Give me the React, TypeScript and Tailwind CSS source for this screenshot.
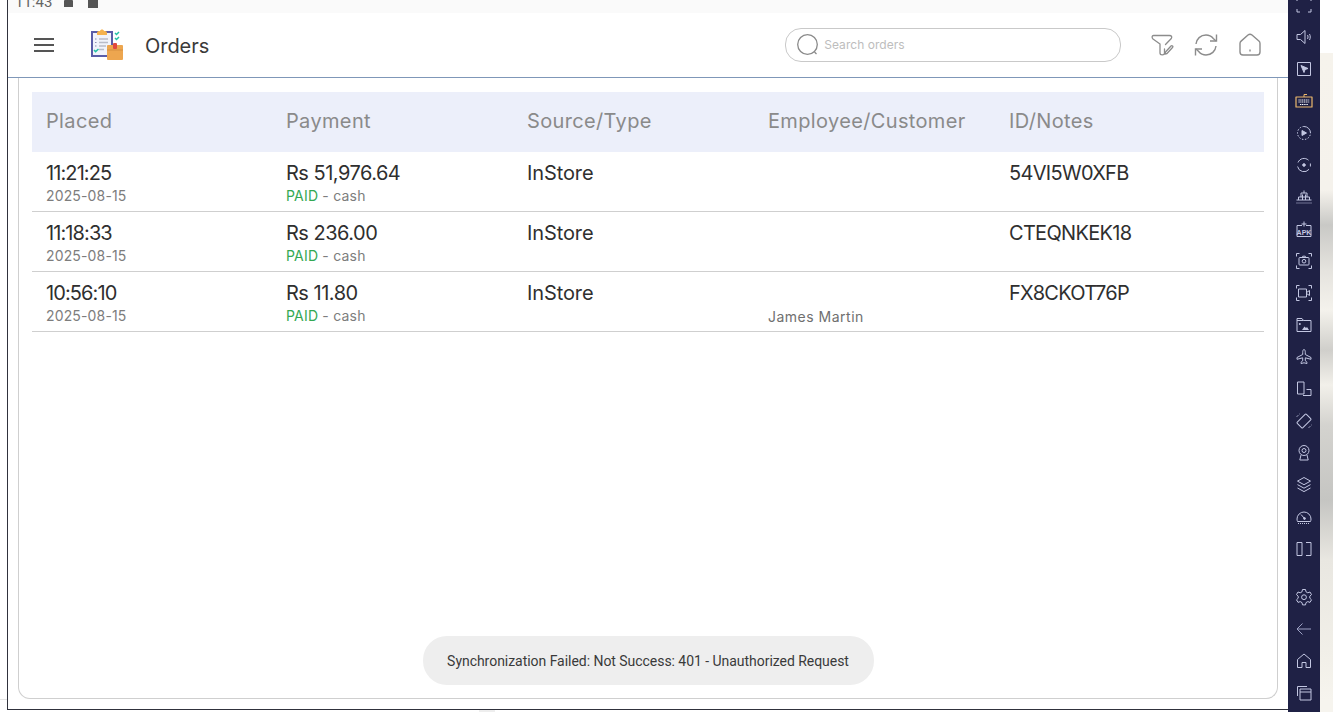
import React from "react";

const S = ({ children, size = 18, color = "#c3c7e2" }: { children: React.ReactNode; size?: number; color?: string }) => (
  <svg width={size} height={size} viewBox="0 0 18 18" fill="none" stroke={color} strokeWidth="1" strokeLinejoin="round">
    {children}
  </svg>
);

const side: (React.ReactNode)[] = [
  <S key="a"><path d="M2 5V2h3M13 2h3v3M16 13v3h-3M5 16H2v-3" /></S>,
  <S key="b"><path d="M2 6.500h3.500L10 2.500v13l-4.500-4H2zM12.500 7c.7 1.200.7 2.800 0 4M14.500 6c1 2 1 4 0 6" /></S>,
  <S key="c"><rect x="2.500" y="2.500" width="13" height="13" /><path d="M6 5.500l7 3-3 1-1 3z" fill="#c3c7e2" /></S>,
  <S key="d" color="#ecb86c"><rect x="1" y="5" width="16" height="10" strokeWidth="1.200" /><path d="M9 5V2.500h3" /><path d="M3.500 8h11M3.500 10h11M5 12.500h8" stroke="#ffffff" strokeDasharray="1.200 .6" /></S>,
  <S key="e"><path d="M15.500 9A6.500 6.500 0 0 0 9 2.500" /><path d="M9 2.500A6.500 6.500 0 0 0 2.500 9c0 3.600 2.900 6.500 6.500 6.500s6.500-2.900 6.500-6.500" strokeDasharray="1.500 1.500" /><path d="M7 6.500l4.500 2.500L7 11.500z" fill="#c3c7e2" /></S>,
  <S key="f"><path d="M13.500 4.200A6.500 6.500 0 0 0 3 6.500M2.600 10.500a6.500 6.500 0 0 0 11.400 2.800M15.400 7.500v3" /><circle cx="9" cy="9" r="1.300" fill="#c3c7e2" /></S>,
  <S key="g"><path d="M1.500 12h15M3.500 12V9h11v3M6 9V5h6v4M9 2.500V5M7.500 6.500V12M10.500 6.500V12" /><path d="M1.500 15h15" strokeDasharray="1 1" /></S>,
  <S key="h"><path d="M2 5.500h5M11 5.500h5M16 5.500V16.500H2V5.500M9 1.500v5M6.500 4h5" /><text x="9" y="14.500" textAnchor="middle" fontSize="7" fontWeight="600" fontFamily="'Liberation Sans',sans-serif" fill="#c3c7e2" stroke="none">APK</text></S>,
  <S key="i"><path d="M1.500 4.500V1.500h3M13.500 1.500h3v3M16.500 13.500v3h-3M4.500 16.500h-3v-3" /><rect x="4" y="5.500" width="10" height="7.500" rx=".8" /><circle cx="9" cy="9.200" r="1.800" /><path d="M7 5.500l.8-1.300h2.400l.8 1.300" /></S>,
  <S key="j"><path d="M1.500 4.500V1.500h3M13.500 1.500h3v3M16.500 13.500v3h-3M4.500 16.500h-3v-3" /><rect x="3.500" y="5" width="8" height="8" /><path d="M11.500 8.500L14.500 6.500v5l-3-2" /></S>,
  <S key="k"><path d="M2 2.500h5l1.500 2H16v11H2zM2 4.500h6.500" /><path d="M7 14l2.500-3.500 1.500 1.500 1-1 2 3z" fill="#c3c7e2" stroke="none" /><circle cx="4.800" cy="8" r="1" fill="#c3c7e2" stroke="none" /></S>,
  <S key="l"><path d="M9 1.500c.9 0 1.300 1.400 1.300 3v2l5.700 3v1.800l-5.700-1.500v3l1.700 1.500v1.200L9 14.800l-3 .7v-1.200l1.700-1.500v-3L2 11.300V9.500l5.700-3v-2c0-1.600.4-3 1.300-3z" /></S>,
  <S key="m"><rect x="2.500" y="2" width="6.500" height="12" /><path d="M11.500 9.500h4.500v6H8" /></S>,
  <S key="n"><rect x="5" y="2.500" width="8" height="13" rx="1" transform="rotate(45 9 9)" /><path d="M1.500 5l3-3M13.500 16l3-3" strokeDasharray="1 .8" /></S>,
  <S key="o"><circle cx="9" cy="6.500" r="5" /><circle cx="9" cy="6.500" r="2" /><path d="M6 11L4.800 16h8.400L12 11" /></S>,
  <S key="p"><path d="M9 1.500l6.500 3.600L9 8.700 2.500 5.100zM2.500 8.600L9 12.200l6.500-3.600M2.500 12L9 15.600l6.500-3.600" /></S>,
  <S key="q"><path d="M2 11a7 7 0 1 1 14 0c0 1-.2 1.700-.5 2.500h-13C2.200 12.700 2 12 2 11z" /><path d="M6 6.500l3.500 4" /><circle cx="9.500" cy="10.500" r=".9" fill="#c3c7e2" /><path d="M3 15.500h12" strokeDasharray="1 1" /></S>,
  <S key="r"><rect x="2" y="2.500" width="5" height="13" /><path d="M11 2.500h5v13h-5" /></S>,
  null,
  <S key="s"><path d="M7.500 1.500h3l.5 2.300 1.800 1 2.200-.8 1.500 2.600-1.700 1.600v2l1.700 1.600-1.500 2.600-2.200-.8-1.800 1-.5 2.300h-3l-.5-2.300-1.800-1-2.200.8L1.500 11.800 3.200 10.200v-2L1.500 6.600 3 4l2.200.8 1.800-1z" /><circle cx="9" cy="9.200" r="2.400" /></S>,
  <S key="t" color="#9da1c4"><path d="M16 9H2M7.500 3.500L2 9l5.500 5.500" /></S>,
  <S key="u"><path d="M2.500 15.500V7.500L9 2l6.500 5.500v8h-4.500v-5H7v5z" /></S>,
  <S key="v"><path d="M2.500 12V2.500H12" /><rect x="5" y="5" width="11" height="11" /><path d="M5 8h11" /></S>,
];

const rows = [
  { t: "11:21:25", p: "Rs 51,976.64", id: "54VI5W0XFB", e: "" },
  { t: "11:18:33", p: "Rs 236.00", id: "CTEQNKEK18", e: "" },
  { t: "10:56:10", p: "Rs 11.80", id: "FX8CKOT76P", e: "James Martin" },
];

const cols = "grid grid-cols-[240px_241px_241px_241px_1fr]";

const Logo = () => (
  <svg width="36" height="36" viewBox="0 0 36 36" fill="none">
    <rect x="1" y="4" width="22" height="26" fill="#5a5da8" />
    <rect x="3" y="6" width="18" height="22" fill="#f1f3fb" />
    <path d="M7 6c0-2 2-2 3-2 .4-2 3.600-2 4 0 1 0 3 0 3 2v2H7z" fill="#f5b24f" />
    <path d="M9 12h9M9 15.500h9M9 19h7M9 22.500h5" stroke="#b9bcc9" strokeWidth="1.600" />
    <path d="M5 12h1.500M5 15.500h1.500M5 19h1.500" stroke="#8b8fb5" strokeWidth="1.200" />
    <path d="M4 23l1.600 1.600L8.500 22" stroke="#25c2a6" strokeWidth="1.500" />
    <path d="M25 6l1.500 1.500L29 5M25 11l1.500 1.500L29 10" stroke="#25c2a6" strokeWidth="1.500" />
    <rect x="17" y="18" width="16" height="15" rx="1" fill="#eda64f" />
    <path d="M17 23h16" stroke="#cf8a3c" strokeWidth=".8" />
    <rect x="23" y="16" width="4" height="6" rx="1" fill="#e2483f" />
  </svg>
);

export default function App() {
  return (
    <div className="flex h-[712px] w-[1333px] overflow-hidden bg-white font-['Inter',sans-serif]">
      <div className="flex w-[1288px] shrink-0 flex-col">
        <div className="flex h-[710px] shrink-0">
          <div className="flex w-[7px] shrink-0 flex-col justify-end">
            <div className="mb-[10px] h-px bg-[#e4e4e4]" />
          </div>
          <div className="flex min-w-0 flex-1 flex-col border-b border-l border-[#30323c]">
            <div className="flex h-[13px] shrink-0 items-start overflow-hidden bg-[#fafafa] pl-[7px] font-['Roboto',sans-serif] text-[15px] leading-[20px] text-[#666]">
              <span className="-mt-[8px] w-[49px] shrink-0">11:43</span>
              <span className="h-[7px] w-[9px] rounded-t-[1px] bg-[#555]" />
              <span className="ml-[15px] h-[8px] w-[10px] bg-[#555]" />
            </div>
            <header className="flex h-[65px] shrink-0 items-center border-b border-[#7f97b8]">
              <button className="ml-[26px] flex w-[20px] flex-col gap-[4px]">
                <span className="h-[2px] bg-[#555]" />
                <span className="h-[2px] bg-[#555]" />
                <span className="h-[2px] bg-[#555]" />
              </button>
              <div className="ml-[36px]"><Logo /></div>
              <h1 className="ml-[19px] mt-[2px] text-[20px] leading-[28px] tracking-[-.05px] text-[#3a3a3a]">Orders</h1>
              <div className="ml-[576px] flex h-[34px] w-[336px] items-center rounded-[16px] border border-[#c9c9c9] pl-[10px]">
                <svg width="24" height="24" viewBox="0 0 24 24" fill="none" stroke="#8a8a8a" strokeWidth="1.300"><circle cx="11.500" cy="11.500" r="9.800" /><path d="M18.500 19l2 2" /></svg>
                <span className="ml-[4px] text-[12px] leading-none tracking-[.05px] text-[#bdbdbd]">Search orders</span>
              </div>
              <div className="ml-[29px] flex items-center gap-[20px]">
                <svg width="24" height="24" viewBox="0 0 24 24" fill="none" stroke="#8c8c8c" strokeWidth="1.300" strokeLinejoin="round" strokeLinecap="round"><path d="M3.500 2.500h16c2 0 2.800 1.500 1.800 3L15.500 11.500M14.500 20V16M10 11L3 6c-1.500-1.500-1-3.500.5-3.500M10 11v9c0 2.500 4.500 2.500 4.500 0" /><path d="M15.500 19l5.500-6c1-1 2.500.5 1.500 1.500L17 20.500l-2 .5z" /></svg>
                <svg width="24" height="24" viewBox="0 0 24 24" fill="none" stroke="#8c8c8c" strokeWidth="1.400"><path d="M2 11C2.500 6 6.500 2 12 2c3 0 5.500 1.300 7.300 3.500L22 8" /><path d="M22.500 1.500V8H16" /><path d="M22 13c-.5 5-4.500 9-10 9-3 0-5.500-1.300-7.300-3.500L2 16" /><path d="M1.500 22.500V16H8" /></svg>
                <svg width="24" height="24" viewBox="0 0 24 24" fill="none" stroke="#8c8c8c" strokeWidth="1.400" strokeLinejoin="round"><path d="M2 10.500c0-1 .4-1.800 1.100-2.400L10 2c1.200-1 2.800-1 4 0l6.900 6.100c.7.600 1.100 1.400 1.100 2.400V19c0 2-1.500 3-3 3H5c-1.500 0-3-1-3-3z" /><path d="M12 16.500v2" /></svg>
              </div>
            </header>
            <div className="flex min-h-0 flex-1 flex-col pl-[10px] pr-[10px] pb-[10px]">
              <div className="flex flex-1 flex-col rounded-b-[12px] border border-t-0 border-[#cfcfcf] px-[13px] pt-[14px]">
                <div className={`${cols} h-[60px] bg-[#eceffa] pb-[3px] text-[20px] tracking-[.35px] text-[#8a8a8a]`}>
                  {["Placed", "Payment", "Source/Type", "Employee/Customer", "ID/Notes"].map((h) => (
                    <div key={h} className="flex items-center pl-[14px]">{h}</div>
                  ))}
                </div>
                {rows.map((r) => (
                  <div key={r.t} className={`${cols} h-[60px] border-b border-[#cfcfcf] pt-[9px] text-[20px] leading-[24px] text-[#2f2f2f]`}>
                    <div className="pl-[14px]">
                      <div className="tracking-[-.9px]">{r.t}</div>
                      <div className="mt-[1px] text-[14px] leading-[20px] tracking-[.15px] text-[#7d7d7d]">2025-08-15</div>
                    </div>
                    <div className="pl-[14px]">
                      <div className="tracking-[-.5px]">{r.p}</div>
                      <div className="mt-[1px] text-[14px] leading-[20px] tracking-[.2px] text-[#7d7d7d]"><span className="text-[#34a853]">PAID</span> - cash</div>
                    </div>
                    <div className="pl-[14px] tracking-[-.1px]">InStore</div>
                    <div className="pl-[14px]">
                      <div className="h-[24px]" />
                      <div className="mt-[2px] text-[14px] leading-[20px] tracking-[.5px] text-[#6f6f6f]">{r.e}</div>
                    </div>
                    <div className="pl-[14px] tracking-[-.7px]">{r.id}</div>
                  </div>
                ))}
                <div className="mt-auto mb-[13px] flex h-[49px] w-[451px] items-center justify-center self-center rounded-[24px] bg-[#eeeeee] pt-[1px] font-['Roboto',sans-serif] text-[14px] tracking-[-.04px] text-[#3a3a3a]">
                  Synchronization Failed: Not Success: 401 - Unauthorized Request
                </div>
              </div>
            </div>
          </div>
        </div>
        <div className="ml-[479px] h-[2px] w-[16px] bg-[#eeeeee]" />
      </div>
      <nav className="flex h-[712px] w-[32px] shrink-0 flex-col items-center bg-[#1f2145]">
        <div className="-mt-[11px] flex flex-col items-center">
          {side.map((ic, i) =>
            ic === null ? (
              <div key={i} className="h-[16px]" />
            ) : (
              <div key={i} className="flex h-[32px] w-[32px] items-center justify-center">{ic}</div>
            )
          )}
        </div>
      </nav>
      <div className="h-[712px] flex-1 bg-[linear-gradient(180deg,#ffffff_53px,#f6f3ec_53px,#f5f2ec_190px,#c9c9c6_225px,#e5e3de_270px,#f4f2ec_310px,#d0cfcb_350px,#f2f0ea_385px,#d4d3cf_425px,#c5c5c2_500px,#e9e7e1_560px,#f2f0e9_660px,#f6f4ee_700px)]" />
    </div>
  );
}
